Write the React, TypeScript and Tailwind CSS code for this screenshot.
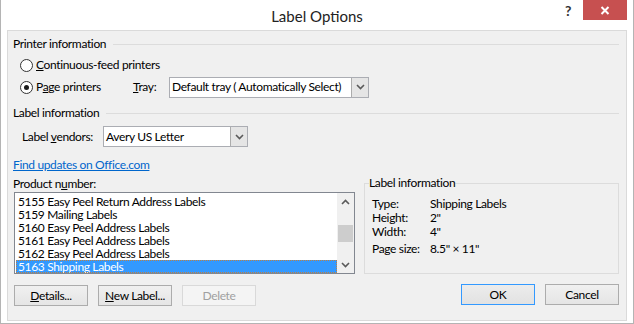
import React from 'react';

const font = { fontFamily: '"Segoe UI", Lato, sans-serif' };

const Chevron = ({ dir = 'down' }: { dir?: 'up' | 'down' }) => (
  <svg width="9" height="6" viewBox="0 0 9 6" className="block">
    {dir === 'down' ? (
      <path d="M1 1 L4.5 4.5 L8 1" fill="none" stroke="#5a5a5a" strokeWidth="1.6" />
    ) : (
      <path d="M1 5 L4.5 1.5 L8 5" fill="none" stroke="#5a5a5a" strokeWidth="1.6" />
    )}
  </svg>
);

const Radio = ({ checked }: { checked?: boolean }) => (
  <span className="w-[13px] h-[13px] rounded-full border border-[#333] bg-white flex items-center justify-center shrink-0">
    {checked && <span className="w-[5px] h-[5px] rounded-full bg-[#1a1a1a]" />}
  </span>
);

const Select = ({ value, width }: { value: string; width: string }) => (
  <div className={`${width} h-[21px] flex border border-[#abadb3] bg-white shrink-0`}>
    <div className="flex-1 flex items-center pl-[2px] text-[12px] text-black whitespace-nowrap overflow-hidden">{value}</div>
    <div className="w-[17px] border-l border-[#acacac] bg-[#e5e5e5] flex items-center justify-center">
      <Chevron />
    </div>
  </div>
);

const GroupHeading = ({ title }: { title: string }) => (
  <div className="h-[16px] flex items-center">
    <span className="text-[12px] text-black whitespace-nowrap">{title}</span>
    <span className="flex-1 h-px bg-[#dcdcdc] ml-[7px]" />
  </div>
);

const Button = ({ label, accel, rest, primary, disabled }: { label?: string; accel?: string; rest?: string; primary?: boolean; disabled?: boolean }) => (
  <div
    className={`w-[74px] h-[21px] flex items-center justify-center text-[12px] whitespace-nowrap border ${
      primary
        ? 'border-[#3399ff] bg-gradient-to-b from-[#ececec] to-[#e2e2e2]'
        : disabled
        ? 'border-[#d9d9d9] bg-[#f4f4f4] text-[#a0a0a0]'
        : 'border-[#acacac] bg-gradient-to-b from-[#f0f0f0] to-[#e5e5e5]'
    }`}
  >
    {accel ? (
      <span>
        <span className="underline">{accel}</span>
        {rest}
      </span>
    ) : (
      label
    )}
  </div>
);

const products = [
  '5155 Easy Peel Return Address Labels',
  '5159 Mailing Labels',
  '5160 Easy Peel Address Labels',
  '5161 Easy Peel Address Labels',
  '5162 Easy Peel Address Labels',
  '5163 Shipping Labels',
];

const info: [string, string][] = [
  ['Type:', 'Shipping Labels'],
  ['Height:', '2"'],
  ['Width:', '4"'],
  ['Page size:', '8.5" × 11"'],
];

export default function App() {
  return (
    <div style={font} className="w-[634px] h-[324px] bg-white border-x border-b border-[#b4b4b4] flex flex-col text-black leading-[16px] tracking-[-0.35px]">
      {/* title bar */}
      <div className="h-[30px] relative flex items-center justify-center shrink-0">
        <span className="text-[15px] text-[#222] mt-[1px] tracking-normal">Label Options</span>
        <span className="absolute left-[564px] top-[3px] text-[14px] font-bold text-[#333]">?</span>
        <div className="absolute left-[582px] top-0 w-[44px] h-[20px] bg-[#c75050] flex items-center justify-center">
          <svg width="10" height="9" viewBox="0 0 10 9">
            <path d="M1.5 1 L8.5 8 M8.5 1 L1.5 8" stroke="white" strokeWidth="2" />
          </svg>
        </div>
      </div>

      {/* content */}
      <div className="mx-[6px] h-[291px] border border-[#dadada] bg-[#f0f0f0] pl-[5px] pr-[7px] flex flex-col text-[12px]">
        <div className="mt-[5px]">
          <GroupHeading title="Printer information" />
        </div>
        <div className="mt-[2px] h-[22px] flex items-center ml-[7px] gap-[3px] whitespace-nowrap">
          <Radio />
          <span>
            <span className="underline">C</span>ontinuous-feed printers
          </span>
        </div>
        <div className="h-[22px] flex items-center ml-[7px] whitespace-nowrap">
          <Radio checked />
          <span className="ml-[3px] w-[97px]">
            P<span className="underline">a</span>ge printers
          </span>
          <span className="w-[36px]">
            <span className="underline">T</span>ray:
          </span>
          <Select value="Default tray ( Automatically Select)" width="w-[200px]" />
        </div>

        <div className="mt-[7px]">
          <GroupHeading title="Label information" />
        </div>
        <div className="mt-[5px] h-[21px] flex items-center ml-[9px] whitespace-nowrap">
          <span className="w-[81px]">
            Label <span className="underline">v</span>endors:
          </span>
          <Select value="Avery US Letter" width="w-[145px]" />
        </div>

        <div className="mt-[10px] h-[16px] flex items-center">
          <span className="text-[#0066cc] underline whitespace-nowrap">Find updates on Office.com</span>
        </div>

        <div className="mt-[3px] flex">
          <div className="w-[342px] flex flex-col">
            <div className="h-[16px] flex items-center whitespace-nowrap">
              <span>
                Product n<span className="underline">u</span>mber:
              </span>
            </div>
            <div className="ml-[1px] h-[82px] border border-[#828790] bg-white flex">
              <div className="flex-1 pt-[2px] pl-px">
                {products.map((p, i) => (
                  <div
                    key={p}
                    className={`h-[13px] leading-[13px] pl-[2px] whitespace-nowrap ${
                      i === 5 ? 'bg-[#3399ff] text-white outline-1 outline-dotted outline-[#c08040] -outline-offset-1' : ''
                    }`}
                  >
                    {p}
                  </div>
                ))}
              </div>
              <div className="w-[17px] bg-[#f0f0f0] flex flex-col items-center">
                <div className="h-[17px] flex items-center justify-center">
                  <Chevron dir="up" />
                </div>
                <div className="flex-1 w-full px-[1px] pt-[15px]">
                  <div className="h-[17px] bg-[#cdcdcd]" />
                </div>
                <div className="h-[17px] flex items-center justify-center">
                  <Chevron />
                </div>
              </div>
            </div>
            <div className="mt-[11px] flex gap-[10px] ml-[1px]">
              <Button accel="D" rest="etails..." />
              <Button accel="N" rest="ew Label..." />
              <Button label="Delete" disabled />
            </div>
          </div>

          <div className="flex-1 flex flex-col ml-[9px]">
            <fieldset className="h-[99px] border border-[#dcdcdc] pl-[7px] pr-[7px] mt-[-1px] min-w-0">
              <legend className="px-0 ml-[-3px] leading-[16px] whitespace-nowrap">Label information</legend>
              <div className="mt-[6px] flex flex-col">
                {info.map(([k, v], i) => (
                  <div key={k} className={`flex h-[14px] leading-[14px] items-center whitespace-nowrap ${i === 3 ? 'mt-[3px]' : ''}`}>
                    <span className="w-[58px]">{k}</span>
                    <span>{v}</span>
                  </div>
                ))}
              </div>
            </fieldset>
            <div className="mt-[10px] flex justify-end gap-[10px]">
              <Button label="OK" primary />
              <Button label="Cancel" />
            </div>
          </div>
        </div>
      </div>
    </div>
  );
}
